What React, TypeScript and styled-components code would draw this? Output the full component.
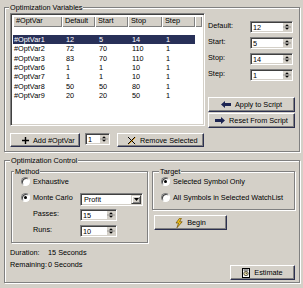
import React from "react";
import styled, { createGlobalStyle } from "styled-components";

const FACE = "#d4d0c8";
const SHADOW = "#808080";
const DARK = "#404040";
const EDGE = "#2c3050";
const SELECT = "#283058";

const GlobalStyle = createGlobalStyle`
  *, *::before, *::after { box-sizing: border-box; }
  html, body { margin: 0; padding: 0; background: ${FACE}; }
  body {
    font-family: "Liberation Sans", Arial, sans-serif;
    font-size: 7.3px;
    color: #000;
  }
`;

const Window = styled.div`
  width: 303px;
  height: 288px;
  padding: 7px 3px 0 4px;
  display: flex;
  flex-direction: column;
  gap: 8px;
  overflow: hidden;
`;

const Group = styled.div<{ $h: number }>`
  position: relative;
  height: ${(p) => p.$h}px;
  border: 1px solid ${SHADOW};
  box-shadow: inset 1px 1px 0 #fff, 1px 1px 0 #fff;
`;

const GroupTitle = styled.span<{ $x: number }>`
  position: absolute;
  top: -5px;
  left: ${(p) => p.$x}px;
  padding: 0 1px;
  line-height: 9px;
  background: ${FACE};
  white-space: nowrap;
`;

/* ---------- Optimization Variables ---------- */

const VarsBody = styled.div`
  display: grid;
  grid-template-columns: 195px 87px;
  column-gap: 3px;
  padding: 5px 0 0 5px;
`;

const LeftCol = styled.div`
  display: flex;
  flex-direction: column;
  gap: 7px;
`;

const RightCol = styled.div`
  display: flex;
  flex-direction: column;
`;

const ListBox = styled.div`
  height: 113px;
  background: #fff;
  border: 1px solid;
  border-color: ${SHADOW} #fff #fff ${SHADOW};
  box-shadow: inset 1px 1px 0 ${DARK}, inset -1px -1px 0 ${FACE};
  padding: 2px;
  overflow: hidden;
`;

const COLS = "49px 33px 33px 34px 33px";

const Header = styled.div`
  display: grid;
  grid-template-columns: ${COLS} 1fr;
  height: 11px;
`;

const HeaderCell = styled.div`
  background: ${FACE};
  line-height: 10px;
  padding-left: 3px;
  box-shadow: inset 1px 1px 0 #fff, inset -1px -1px 0 ${SHADOW};
  white-space: nowrap;
  overflow: hidden;
`;

const Rows = styled.div`
  padding-top: 8px;
`;

const Row = styled.div<{ $sel?: boolean }>`
  display: grid;
  grid-template-columns: ${COLS};
  width: 182px;
  height: 9.33px;
  line-height: 9.33px;
  background: ${(p) => (p.$sel ? SELECT : "transparent")};
  color: ${(p) => (p.$sel ? "#fff" : "#000")};
`;

const Cell = styled.span<{ $first?: boolean }>`
  padding-left: ${(p) => (p.$first ? 1 : 4)}px;
  white-space: nowrap;
`;

const ActionRow = styled.div`
  display: flex;
  align-items: flex-start;
  height: 14px;
`;

const FieldGrid = styled.div`
  display: grid;
  grid-template-columns: 42px 43px;
  grid-auto-rows: 12px;
  row-gap: 4px;
  align-items: start;
  margin-top: 8px;
`;

const Label = styled.span`
  line-height: 9px;
  white-space: nowrap;
`;

const ButtonStack = styled.div`
  display: flex;
  flex-direction: column;
  gap: 1px;
  margin-top: 16px;
`;

const Button = styled.button<{ $w: number; $h?: number; $mt?: number; $ml?: number; $pl?: number }>`
  width: ${(p) => p.$w}px;
  height: ${(p) => p.$h ?? 15}px;
  margin: ${(p) => p.$mt ?? 0}px 0 0 ${(p) => p.$ml ?? 0}px;
  padding: 0 0 0 ${(p) => p.$pl ?? 0}px;
  flex: none;
  background: ${FACE};
  font: inherit;
  color: #000;
  border: 1px solid;
  border-color: #fff ${EDGE} ${EDGE} #fff;
  box-shadow: inset -1px -1px 0 ${SHADOW};
  display: flex;
  align-items: center;
  justify-content: ${(p) => (p.$pl ? "flex-start" : "center")};
  gap: 4px;
  white-space: nowrap;
  line-height: 9px;
  & > svg { flex: none; display: block; }
`;

const SpinBox = styled.div<{ $w: number; $ml?: number }>`
  width: ${(p) => p.$w}px;
  height: 12px;
  margin-left: ${(p) => p.$ml ?? 0}px;
  flex: none;
  display: flex;
  background: #fff;
  border: 1px solid;
  border-color: ${SHADOW} #fff #fff ${SHADOW};
  box-shadow: inset 1px 1px 0 ${DARK}, inset -1px -1px 0 ${FACE};
  padding: 1px;
  & > svg { flex: none; display: block; }
`;

const SpinValue = styled.span`
  flex: 1;
  padding-left: 1px;
  line-height: 9px;
`;

/* ---------- Optimization Control ---------- */

const ControlBody = styled.div`
  display: grid;
  grid-template-columns: 137px 143px;
  column-gap: 4px;
  padding: 10px 0 0 6px;
`;

const ColumnStack = styled.div`
  display: flex;
  flex-direction: column;
`;

const MethodBody = styled.div`
  display: flex;
  flex-direction: column;
  padding: 5px 0 0 9px;
`;

const OptionRow = styled.div<{ $top?: number }>`
  display: grid;
  grid-template-columns: 12px 47px 63px;
  align-items: start;
  margin-top: ${(p) => p.$top ?? 0}px;
`;

const Wide = styled.span`
  grid-column: 2 / 4;
  line-height: 9px;
  white-space: nowrap;
`;

const TargetBody = styled.div`
  display: flex;
  flex-direction: column;
  gap: 7px;
  padding: 5px 0 0 8px;
`;

const RadioLine = styled.div`
  display: flex;
  align-items: flex-start;
  gap: 3px;
  line-height: 9px;
  white-space: nowrap;
`;

const Radio = styled.span<{ $on?: boolean }>`
  position: relative;
  display: inline-block;
  flex: none;
  width: 9px;
  height: 9px;
  border-radius: 50%;
  background: #fff;
  border: 1px solid;
  border-color: ${SHADOW} #fff #fff ${SHADOW};
  box-shadow: inset 1px 1px 0 ${DARK};
  &::after {
    content: "";
    display: ${(p) => (p.$on ? "block" : "none")};
    position: absolute;
    left: 2px;
    top: 2px;
    width: 3px;
    height: 3px;
    border-radius: 50%;
    background: #000;
  }
`;

const Select = styled.div`
  width: 63px;
  height: 13px;
  display: flex;
  background: #fff;
  border: 1px solid;
  border-color: ${SHADOW} #fff #fff ${SHADOW};
  box-shadow: inset 1px 1px 0 ${DARK}, inset -1px -1px 0 ${FACE};
  padding: 1px;
`;

const SelectText = styled.span`
  flex: 1;
  padding-left: 2px;
  line-height: 10px;
`;

const SelectButton = styled.span`
  width: 10px;
  background: ${FACE};
  border: 1px solid;
  border-color: ${FACE} ${DARK} ${DARK} ${FACE};
  box-shadow: inset 1px 1px 0 #fff, inset -1px -1px 0 ${SHADOW};
  display: flex;
  align-items: center;
  justify-content: center;
`;

const InfoGrid = styled.div`
  display: grid;
  grid-template-columns: 38px auto;
  grid-auto-rows: 12px;
  line-height: 12px;
  margin: 4px 0 0 -1px;
  white-space: nowrap;
`;

const EndButton = styled(Button)`
  align-self: flex-end;
`;

/* ---------- icons ---------- */

const SpinArrows = () => (
  <svg width="8" height="8" viewBox="0 0 8 8">
    <rect width="8" height="8" fill={FACE} />
    <path d="M2 3.3 L4 1.3 L6 3.3Z" fill="#000" />
    <line x1="0" y1="4" x2="8" y2="4" stroke={SHADOW} strokeWidth="0.7" />
    <path d="M2 4.8 L4 6.8 L6 4.8Z" fill="#000" />
  </svg>
);

const DownArrow = () => (
  <svg width="5" height="3" viewBox="0 0 5 3">
    <path d="M0 0 H5 L2.5 3Z" fill="#000" />
  </svg>
);

const PlusIcon = () => (
  <svg width="7" height="7" viewBox="0 0 7 7">
    <path d="M2.8 0h1.4v7H2.8z M0 2.8h7v1.4H0z" fill="#000" />
  </svg>
);

const XIcon = () => (
  <svg width="9" height="9" viewBox="0 0 9 9">
    <path d="M1.6 1.6 L8.4 8.4 M8.4 1.6 L1.6 8.4" stroke="#e8a020" strokeWidth="1" />
    <path d="M1 1 L8 8 M8 1 L1 8" stroke="#000" strokeWidth="1" />
  </svg>
);

const ArrowLeft = () => (
  <svg width="10" height="7" viewBox="0 0 10 7">
    <path d="M0 3.5 L4 0 V2 H10 V5 H4 V7Z" fill="#1c2452" />
  </svg>
);

const ArrowRight = () => (
  <svg width="10" height="7" viewBox="0 0 10 7">
    <path d="M10 3.5 L6 0 V2 H0 V5 H6 V7Z" fill="#1c2452" />
  </svg>
);

const BoltIcon = () => (
  <svg width="8" height="10" viewBox="0 0 8 10">
    <path d="M4.5 0.3 L1 5 H3.6 L2 9.7 L7.2 3.8 H4.6 L6.4 0.3Z" fill="#f2c41c" stroke="#6a4a00" strokeWidth="0.7" strokeLinejoin="round" />
  </svg>
);

const EstimateIcon = () => (
  <svg width="8" height="10" viewBox="0 0 8 10">
    <rect x="0.5" y="0.5" width="7" height="9" fill="#fff" stroke="#000" />
    <circle cx="4" cy="5.5" r="2.2" fill="#f3e6b0" stroke="#000" strokeWidth="0.6" />
    <path d="M4 4.2 V5.6 H5.2" stroke="#000" strokeWidth="0.6" fill="none" />
    <path d="M1.5 2 H6.5" stroke="#000" strokeWidth="0.8" />
  </svg>
);

/* ---------- parts ---------- */

function Spin({ value, w, ml }: { value: string; w: number; ml?: number }) {
  return (
    <SpinBox $w={w} $ml={ml}>
      <SpinValue>{value}</SpinValue>
      <SpinArrows />
    </SpinBox>
  );
}

const HEAD = ["#OptVar", "Default", "Start", "Stop", "Step", ""];
const DATA = [
  ["#OptVar1", "12", "5", "14", "1"],
  ["#OptVar2", "72", "70", "110", "1"],
  ["#OptVar3", "83", "70", "110", "1"],
  ["#OptVar6", "1", "1", "10", "1"],
  ["#OptVar7", "1", "1", "10", "1"],
  ["#OptVar8", "50", "50", "80", "1"],
  ["#OptVar9", "20", "20", "50", "1"],
];

const FIELDS = [
  ["Default:", "12"],
  ["Start:", "5"],
  ["Stop:", "14"],
  ["Step:", "1"],
];

export default function App() {
  return (
    <>
      <GlobalStyle />
      <Window>
        <Group $h={145}>
          <GroupTitle $x={4}>Optimization Variables</GroupTitle>
          <VarsBody>
            <LeftCol>
              <ListBox>
                <Header>
                  {HEAD.map((h, i) => (
                    <HeaderCell key={i}>{h}</HeaderCell>
                  ))}
                </Header>
                <Rows>
                  {DATA.map((r, i) => (
                    <Row key={r[0]} $sel={i === 0}>
                      {r.map((c, j) => (
                        <Cell key={j} $first={j === 0}>
                          {c}
                        </Cell>
                      ))}
                    </Row>
                  ))}
                </Rows>
              </ListBox>
              <ActionRow>
                <Button $w={70} $h={14} $pl={11}>
                  <PlusIcon />
                  Add #OptVar
                </Button>
                <Spin value="1" w={25} ml={5} />
                <Button $w={87} $h={14} $ml={7} $pl={9}>
                  <XIcon />
                  Remove Selected
                </Button>
              </ActionRow>
            </LeftCol>
            <RightCol>
              <FieldGrid>
                {FIELDS.map(([l, v]) => (
                  <React.Fragment key={l}>
                    <Label>{l}</Label>
                    <Spin value={v} w={43} />
                  </React.Fragment>
                ))}
              </FieldGrid>
              <ButtonStack>
                <Button $w={87}>
                  <ArrowLeft />
                  Apply to Script
                </Button>
                <Button $w={87}>
                  <ArrowRight />
                  Reset From Script
                </Button>
              </ButtonStack>
            </RightCol>
          </VarsBody>
        </Group>

        <Group $h={123}>
          <GroupTitle $x={5}>Optimization Control</GroupTitle>
          <ControlBody>
            <ColumnStack>
              <Group $h={72}>
                <GroupTitle $x={2}>Method</GroupTitle>
                <MethodBody>
                  <OptionRow>
                    <Radio />
                    <Wide>Exhaustive</Wide>
                  </OptionRow>
                  <OptionRow $top={7}>
                    <Radio $on />
                    <Label>Monte Carlo</Label>
                    <Select>
                      <SelectText>Profit</SelectText>
                      <SelectButton>
                        <DownArrow />
                      </SelectButton>
                    </Select>
                  </OptionRow>
                  <OptionRow $top={3}>
                    <span />
                    <Label>Passes:</Label>
                    <Spin value="15" w={37} />
                  </OptionRow>
                  <OptionRow $top={4}>
                    <span />
                    <Label>Runs:</Label>
                    <Spin value="10" w={37} />
                  </OptionRow>
                </MethodBody>
              </Group>
              <InfoGrid>
                <span>Duration:</span>
                <span>15 Seconds</span>
                <span>Remaining:</span>
                <span>0 Seconds</span>
              </InfoGrid>
            </ColumnStack>
            <ColumnStack>
              <Group $h={39}>
                <GroupTitle $x={6}>Target</GroupTitle>
                <TargetBody>
                  <RadioLine>
                    <Radio $on />
                    Selected Symbol Only
                  </RadioLine>
                  <RadioLine>
                    <Radio />
                    All Symbols in Selected WatchList
                  </RadioLine>
                </TargetBody>
              </Group>
              <Button $w={73} $mt={5} $ml={2}>
                <BoltIcon />
                Begin
              </Button>
              <EndButton $w={65} $mt={35}>
                <EstimateIcon />
                Estimate
              </EndButton>
            </ColumnStack>
          </ControlBody>
        </Group>
      </Window>
    </>
  );
}
